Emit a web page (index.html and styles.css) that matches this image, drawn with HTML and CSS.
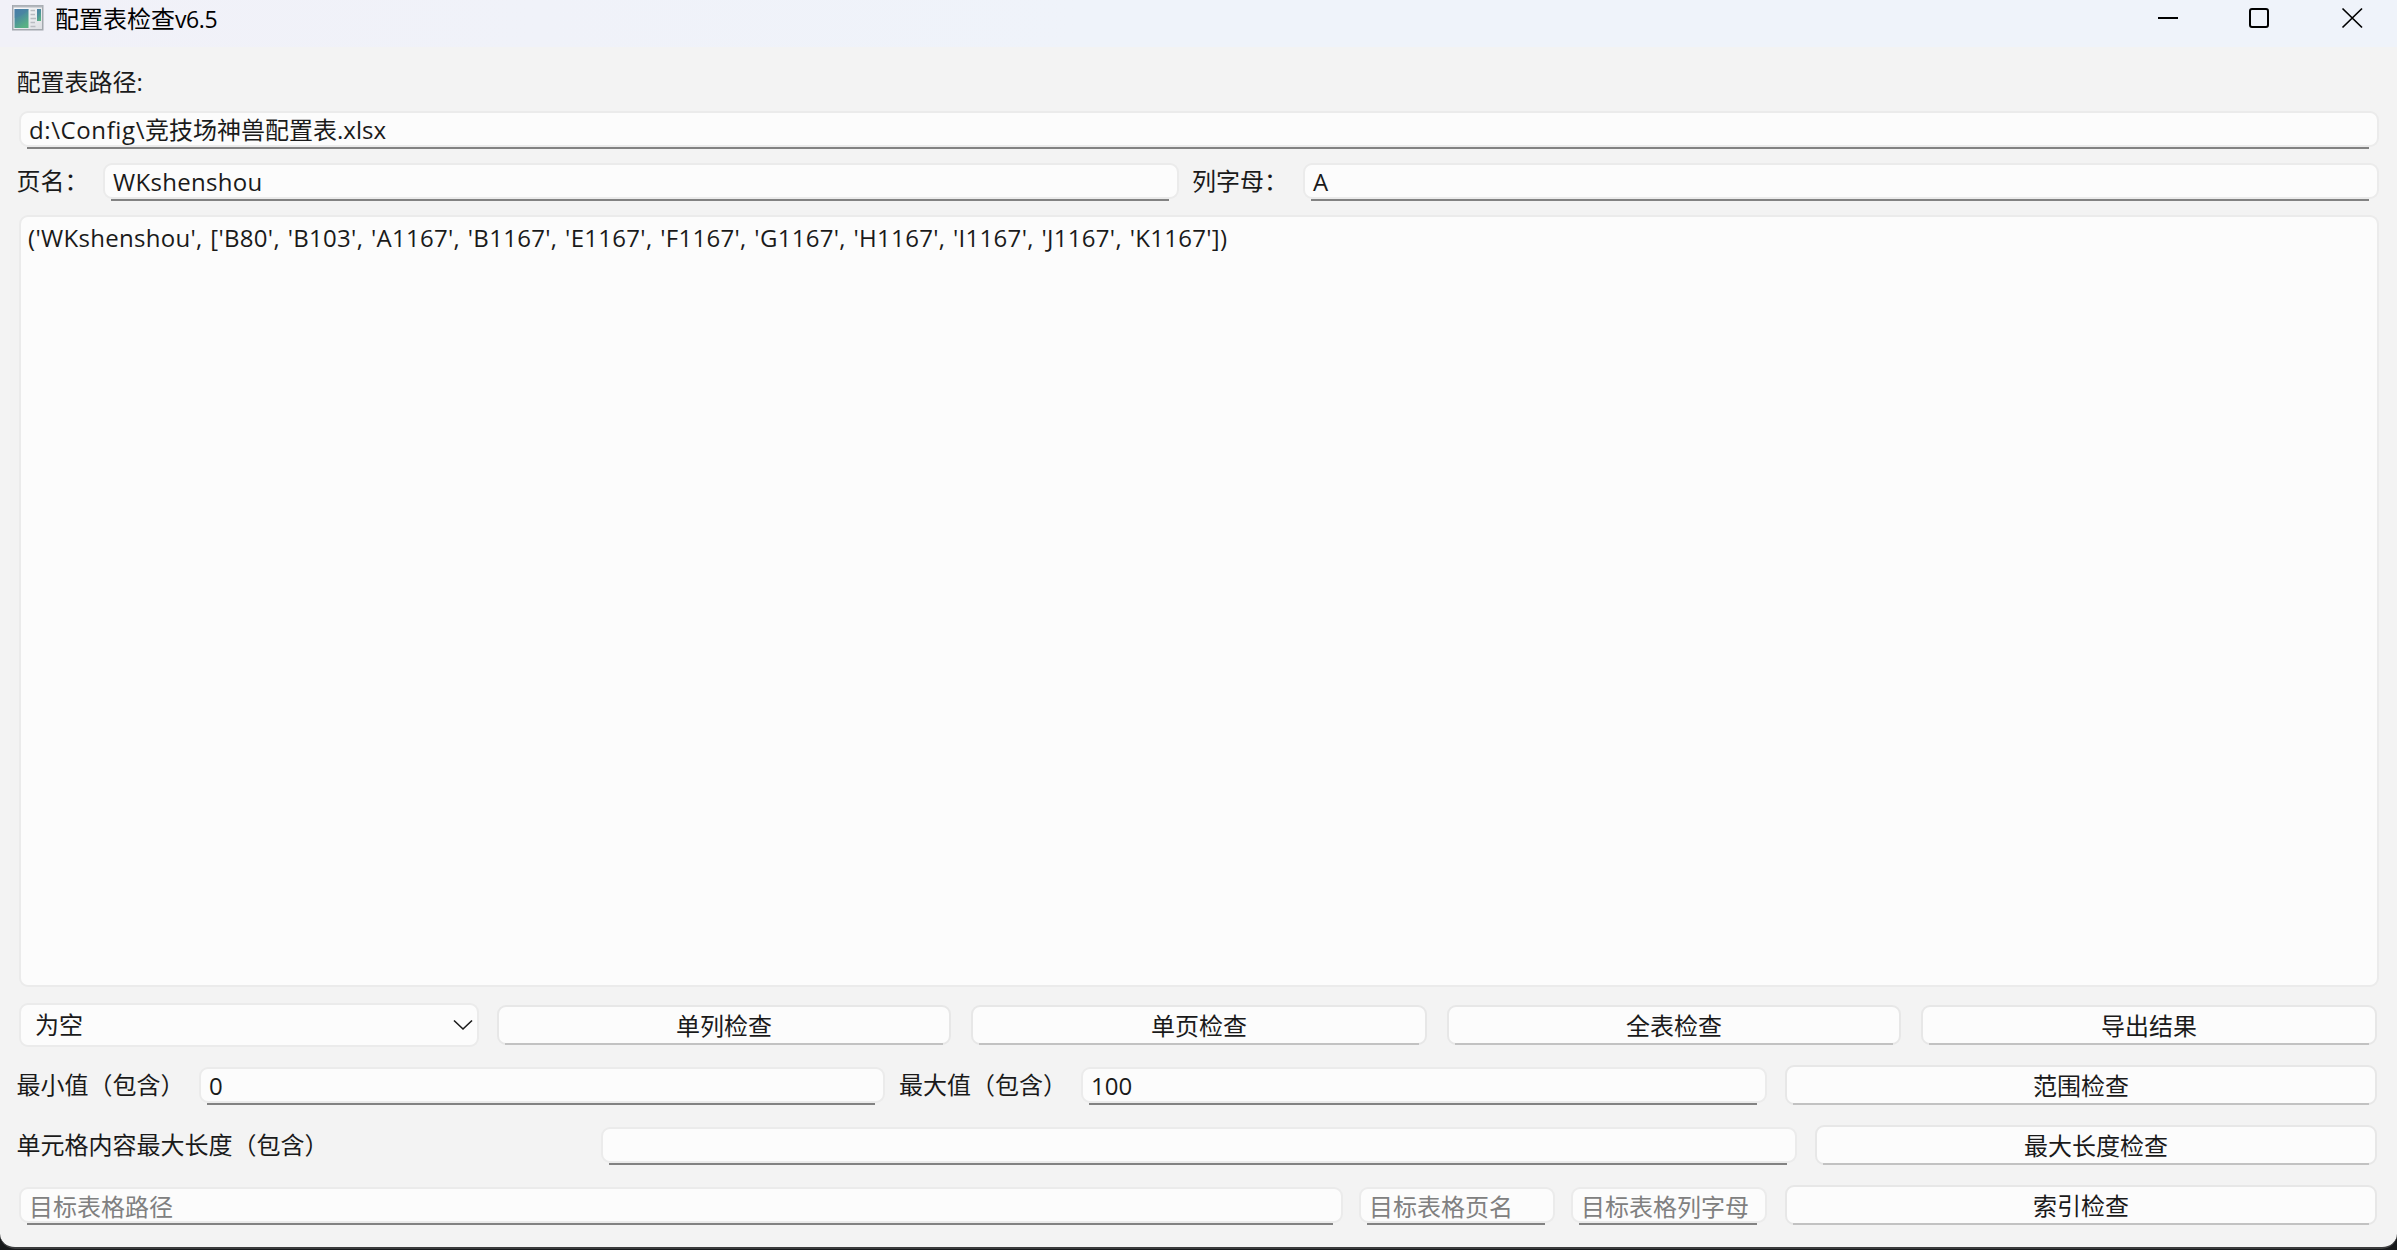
FILE: index.html
```html
<!DOCTYPE html>
<html lang="zh-CN">
<head>
<meta charset="utf-8">
<title>配置表检查v6.5</title>
<link rel="stylesheet" href="styles.css">
</head>
<body>
<div class="window">
  <header class="titlebar">
    <svg class="app-icon" width="32" height="26" viewBox="0 0 32 26">
      <defs>
        <linearGradient id="pane" x1="0" y1="0" x2="0.5" y2="1">
          <stop offset="0" stop-color="#4a7fa8"/><stop offset="0.5" stop-color="#4c8f9c"/><stop offset="1" stop-color="#58b184"/>
        </linearGradient>
        <linearGradient id="frame" x1="0" y1="0" x2="1" y2="1">
          <stop offset="0" stop-color="#fdfdfe"/><stop offset="1" stop-color="#dcdee2"/>
        </linearGradient>
      </defs>
      <rect x="0.75" y="0.75" width="30" height="24" fill="url(#frame)" stroke="#a3a8ae" stroke-width="1.5"/>
      <rect x="1" y="0.5" width="29.5" height="2" fill="#b3b7bd"/>
      <rect x="2.5" y="4" width="14" height="19" fill="url(#pane)"/>
      <path d="M2.5 13Q10 11 16.500 5V4h-14z" fill="#4879a8" opacity=".35"/>
      <path d="M18.500 5.500h4.500M18.500 9.500h4.500M18.500 13.500h5.500M18.500 17.500h4.500M18.500 21.500h5" stroke="#b9bcc1" stroke-width="1.300"/>
      <rect x="25" y="4" width="4" height="12" fill="url(#pane)"/>
    </svg>
    <div class="title">配置表检查<span class="title-latin">v6.5</span></div>
    <svg class="controls" width="214" height="47" viewBox="0 0 214 47" fill="none" stroke="#000" stroke-width="2">
      <path d="M5 18h20"/>
      <rect x="97" y="9" width="18" height="18" rx="2"/>
      <path d="M189.500 8.500l19.500 19M209 8.500l-19.500 19" stroke-width="1.700"/>
    </svg>
  </header>

  <main class="form">
    <div class="label path-label">配置表路径:</div>
    <div class="row path-row">
      <div class="field grow"><span class="lat-path">d:\Config\</span>竞技场神兽配置表<span class="lat-ext">.xlsx</span></div>
    </div>
    <div class="row sheet-row">
      <div class="label w-sheet">页名：</div>
      <div class="field w-sheet-field"><span class="lat-name">WKshenshou</span></div>
      <div class="label w-column">列字母：</div>
      <div class="field grow"><span>A</span></div>
    </div>
    <div class="output"><span class="lat-result">('WKshenshou', ['B80', 'B103', 'A1167', 'B1167', 'E1167', 'F1167', 'G1167', 'H1167', 'I1167', 'J1167', 'K1167'])</span></div>
    <div class="row check-row">
      <div class="combo">为空
        <svg class="chevron" width="20" height="12" viewBox="0 0 20 12" fill="none" stroke="#1a1a1a" stroke-width="1.600"><path d="M1 1.500l9 8.500 9-8.500"/></svg>
      </div>
      <div class="button b1">单列检查</div>
      <div class="button b2">单页检查</div>
      <div class="button b3">全表检查</div>
      <div class="button b4">导出结果</div>
    </div>
    <div class="row">
      <div class="label w-min">最小值（包含）</div>
      <div class="field w-min-field"><span>0</span></div>
      <div class="label w-max">最大值（包含）</div>
      <div class="field w-max-field"><span class="lat-num">100</span></div>
      <div class="button w-action">范围检查</div>
    </div>
    <div class="row">
      <div class="label w-length">单元格内容最大长度（包含）</div>
      <div class="field w-length-field"></div>
      <div class="button w-length-action">最大长度检查</div>
    </div>
    <div class="row">
      <div class="field hint w-target-path">目标表格路径</div>
      <div class="field hint w-target-sheet">目标表格页名</div>
      <div class="field hint w-target-column">目标表格列字母</div>
      <div class="button w-action">索引检查</div>
    </div>
  </main>
</div>
</body>
</html>
```
FILE: styles.css
```css
* { box-sizing: border-box; }

body {
  margin: 0;
  height: 1250px;
  overflow: hidden;
  background: #17191b;
  color: #1a1a1a;
  font: 24px/36px "Open Sans", "Noto Sans CJK SC", sans-serif;
}

.window {
  position: relative;
  z-index: 0;
  height: 1249px;
  overflow: hidden;
  background: #f3f3f3;
  border-bottom: 2px solid #3b3c3d;
  border-radius: 0 0 15px 15px;
}

.titlebar {
  display: flex;
  height: 47px;
  padding-left: 12px;
  background: linear-gradient(90deg, #f1f1f8, #eff3fa 45%, #eff3fa);
  color: #000;
}
.app-icon { margin-top: 5px; }
.title { flex: 1; margin-left: 11px; line-height: 37px; }
.title-latin { font-size: 23px; letter-spacing: -0.4px; }
.controls { margin-right: 30px; }

.form { padding-left: 19px; }
.label { margin-left: -2.5px; line-height: 40px; white-space: nowrap; }
.path-label { height: 64px; padding-top: 15px; }

.row { display: flex; align-items: flex-end; height: 40px; margin-bottom: 20px; padding-right: 20px; }
.path-row { height: 38px; margin-bottom: 14px; padding-right: 18px; }
.sheet-row { height: 38px; margin-bottom: 14px; padding-right: 18px; }

.field {
  position: relative;
  height: 38px;
  padding-left: 10px;
  line-height: 38px;
  white-space: nowrap;
}
.field::before {
  content: "";
  position: absolute;
  z-index: -1;
  inset: 0 0 2px;
  border: 2px solid #ebebeb;
  border-radius: 9px;
  background: #fcfcfc;
}
.field::after {
  content: "";
  position: absolute;
  left: 8px;
  right: 10px;
  bottom: 0;
  height: 2px;
  background: #828282;
}
.grow { flex: 1; }
.hint { color: #808080; line-height: 39px; }

.output {
  height: 772px;
  width: 2360px;
  margin-bottom: 18px;
  padding: 3px 7px;
  border: 2px solid #ebebeb;
  border-radius: 9px;
  background: #fcfcfc;
  white-space: nowrap;
}

.combo {
  display: flex;
  justify-content: space-between;
  align-items: center;
  width: 460px;
  height: 44px;
  margin: 0 18px -2px 0;
  padding: 0 4px 0 14px;
  border: 2px solid #ebebeb;
  border-radius: 9px;
  background: #fcfcfc;
}

.button {
  position: relative;
  height: 40px;
  border: 2px solid #e7e7e7;
  border-radius: 9px;
  background: #fcfcfc;
  line-height: 37px;
  text-align: center;
}
.button::after {
  content: "";
  position: absolute;
  left: 6px;
  right: 6px;
  bottom: -2px;
  height: 2px;
  background: #c2c2c2;
}

.b1 { width: 454px; margin-right: 20px; }
.b2 { width: 456px; margin-right: 20px; }
.b3 { width: 454px; margin-right: 20px; }
.b4 { width: 456px; }

.w-sheet { width: 86.5px; }
.w-sheet-field { width: 1076px; }
.w-column { width: 111px; margin-left: 13px; }
.w-min { width: 182.5px; }
.w-min-field { width: 686px; }
.w-max { width: 182px; margin-left: 14px; }
.w-max-field { width: 686px; }
.w-action { width: 592px; margin-left: 18px; }
.w-length { width: 584.5px; }
.w-length-field { width: 1196px; }
.w-length-action { width: 562px; margin-left: 18px; }
.w-target-path { width: 1324px; }
.w-target-sheet { width: 196px; margin-left: 16px; }
.w-target-column { width: 196px; margin-left: 16px; }

.lat-path { letter-spacing: 0.6px; }
.lat-name { letter-spacing: 0.3px; }
.lat-result { letter-spacing: 0.3px; word-spacing: 1.2px; }
```
